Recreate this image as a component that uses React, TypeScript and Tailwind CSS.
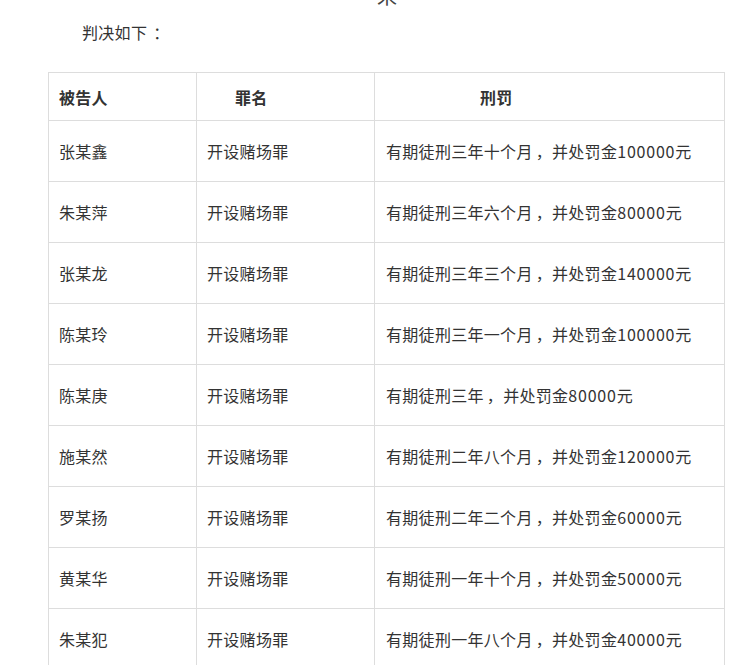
import React from 'react';

interface Row {
  name: string;
  crime: string;
  penalty: string;
}

const rows: Row[] = [
  { name: '张某鑫', crime: '开设赌场罪', penalty: '有期徒刑三年十个月，并处罚金100000元' },
  { name: '朱某萍', crime: '开设赌场罪', penalty: '有期徒刑三年六个月，并处罚金80000元' },
  { name: '张某龙', crime: '开设赌场罪', penalty: '有期徒刑三年三个月，并处罚金140000元' },
  { name: '陈某玲', crime: '开设赌场罪', penalty: '有期徒刑三年一个月，并处罚金100000元' },
  { name: '陈某庚', crime: '开设赌场罪', penalty: '有期徒刑三年，并处罚金80000元' },
  { name: '施某然', crime: '开设赌场罪', penalty: '有期徒刑二年八个月，并处罚金120000元' },
  { name: '罗某扬', crime: '开设赌场罪', penalty: '有期徒刑二年二个月，并处罚金60000元' },
  { name: '黄某华', crime: '开设赌场罪', penalty: '有期徒刑一年十个月，并处罚金50000元' },
  { name: '朱某犯', crime: '开设赌场罪', penalty: '有期徒刑一年八个月，并处罚金40000元' },
];

const Penalty: React.FC<{ text: string }> = ({ text }) => {
  const [a, b] = text.split('，');
  const m = b.match(/^(\D+)(\d+)(\D*)$/);
  return (
    <>
      {a}
      <span className="pl-[3px]">，</span>
      {m ? (
        <>
          {m[1]}
          <span className="tracking-[0.8px]">{m[2]}</span>
          {m[3]}
        </>
      ) : (
        b
      )}
    </>
  );
};

const App: React.FC = () => {
  return (
    <div
      className="h-[665px] overflow-hidden bg-white text-[#333] text-[16px] tracking-[0.3px]"
      style={{ fontFamily: '"Noto Sans CJK SC", "Noto Sans", sans-serif' }}
    >
      {/* cut-off title above */}
      <div className="h-[10px] overflow-hidden">
        <div className="-mt-[16px] ml-[377px] text-[20px] leading-[24px] text-[#444]">来</div>
      </div>

      <p className="ml-[82px] mt-[10px] leading-[24px]">
        判决如下<span className="pl-[6px]">：</span>
      </p>

      <table className="ml-[48px] mt-[28px] w-[677px] border-collapse table-fixed">
        <colgroup>
          <col className="w-[148px]" />
          <col className="w-[178px]" />
          <col />
        </colgroup>
        <thead>
          <tr className="h-[48px]">
            <th className="border border-[#ddd] pl-[10px] text-left font-bold">被告人</th>
            <th className="border border-[#ddd] pl-[38px] text-left font-bold">罪名</th>
            <th className="border border-[#ddd] pl-[105px] text-left font-bold">刑罚</th>
          </tr>
        </thead>
        <tbody>
          {rows.map((r, i) => (
            <tr key={i} className="h-[61px]">
              <td className="border border-[#ddd] pl-[10px]">{r.name}</td>
              <td className="border border-[#ddd] pl-[10px]">{r.crime}</td>
              <td className="border border-[#ddd] pl-[11px]">
                <Penalty text={r.penalty} />
              </td>
            </tr>
          ))}
        </tbody>
      </table>
    </div>
  );
};

export default App;
